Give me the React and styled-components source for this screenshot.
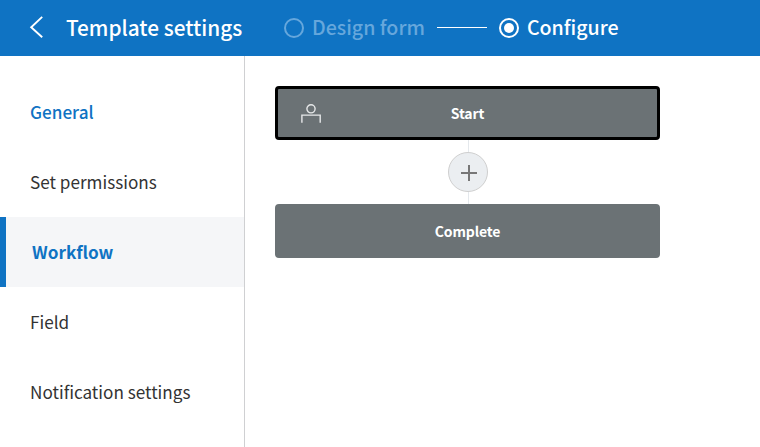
import React from "react";
import styled, { createGlobalStyle, css } from "styled-components";

const Global = createGlobalStyle`
  * { box-sizing: border-box; }
  body {
    margin: 0;
    background: #fff;
    font-family: "Noto Sans CJK KR", "Noto Sans", sans-serif;
    overflow: hidden;
  }
`;

const Page = styled.div`
  display: flex;
  flex-direction: column;
  width: 760px;
  height: 447px;
`;

const Header = styled.header`
  flex: none;
  display: flex;
  align-items: center;
  height: 56px;
  padding-left: 29px;
  background: #0f73c3;
  color: #fff;
`;

const BackIcon = styled.svg`
  width: 14px;
  height: 22px;
  margin-bottom: 2px;
`;

const Title = styled.h1`
  flex: none;
  width: 218px;
  margin: 0 0 0 23px;
  padding-bottom: 1px;
  font-size: 20.8px;
  font-weight: 500;
  line-height: 55px;
  white-space: nowrap;
`;

const Step = styled.div`
  display: flex;
  align-items: center;
  gap: 8px;
  height: 56px;
  color: ${(p) => (p.$active ? "#fff" : "#66a7dc")};
  font-size: 19.6px;
  font-weight: 500;
  white-space: nowrap;
`;

const StepLabel = styled.span`
  line-height: 54px;
  padding-bottom: 2px;
`;

const StepRing = styled.span`
  display: grid;
  place-items: center;
  width: 20px;
  height: 20px;
  border: 2px solid currentColor;
  border-radius: 50%;
`;

const StepDot = styled.span`
  width: 10px;
  height: 10px;
  border-radius: 50%;
  background: currentColor;
`;

const StepLine = styled.div`
  width: 50px;
  height: 1px;
  margin: 0 12px 2px;
  background: #fff;
`;

const Body = styled.div`
  display: flex;
  flex: 1;
`;

const Side = styled.nav`
  width: 245px;
  padding-top: 21px;
  border-right: 1px solid #cfd0d2;
`;

const Item = styled.div`
  height: 70px;
  padding-left: 30px;
  color: #333;
  font-size: 17.15px;
  line-height: 69px;
  ${(p) => p.$highlight && css`
    color: #0f73c3;
    font-weight: 500;
  `}
  ${(p) => p.$selected && css`
    padding-left: 26px;
    border-left: 6px solid #0f73c3;
    background: #f5f6f8;
    color: #0f73c3;
    font-weight: 700;
  `}
`;

const Main = styled.main`
  padding: 30px;
`;

const Flow = styled.div`
  display: flex;
  flex-direction: column;
  align-items: center;
  width: 385px;
`;

const Node = styled.div`
  display: grid;
  grid-template-columns: 48px 1fr 48px;
  align-items: center;
  width: 385px;
  height: 54px;
  border: 3px solid ${(p) => (p.$selected ? "#000" : "#6b7275")};
  border-radius: 4px;
  background: #6b7275;
`;

const NodeLabel = styled.span`
  grid-column: 2;
  grid-row: 1;
  color: #fff;
  font-size: 14px;
  font-weight: 700;
  letter-spacing: -0.12px;
  line-height: 20px;
  text-align: center;
`;

const PersonIcon = styled.svg`
  grid-column: 1;
  grid-row: 1;
  justify-self: end;
  width: 25px;
  height: 20px;
`;

const Connector = styled.div`
  width: 1px;
  height: 12px;
  margin-left: 1px;
  background: #e4e8ec;
`;

const AddButton = styled.button`
  display: grid;
  place-items: center;
  width: 40px;
  height: 40px;
  padding: 0;
  border: 1px solid #cfcfcf;
  border-radius: 50%;
  background: #ebeef1;
`;

const PlusIcon = styled.svg`
  width: 16px;
  height: 16px;
  margin: 2px 0 0 2px;
`;

const items = [
  { label: "General", highlight: true },
  { label: "Set permissions" },
  { label: "Workflow", selected: true },
  { label: "Field" },
  { label: "Notification settings" },
];

export default function App() {
  return (
    <Page>
      <Global />
      <Header>
        <BackIcon viewBox="0 0 14 22" fill="none" stroke="#fff" strokeWidth="1.9">
          <path d="M13.2 0.9L2.2 11.2L13.2 21.3" />
        </BackIcon>
        <Title>Template settings</Title>
        <Step>
          <StepRing />
          <StepLabel>Design form</StepLabel>
        </Step>
        <StepLine />
        <Step $active>
          <StepRing><StepDot /></StepRing>
          <StepLabel>Configure</StepLabel>
        </Step>
      </Header>
      <Body>
        <Side>
          {items.map((it) => (
            <Item key={it.label} $highlight={it.highlight} $selected={it.selected}>
              {it.label}
            </Item>
          ))}
        </Side>
        <Main>
          <Flow>
            <Node $selected>
              <PersonIcon viewBox="0 0 25 20" fill="none" stroke="#e6e8e9" strokeWidth="1.4">
                <circle cx="10" cy="5.8" r="4.1" />
                <path d="M0.9 19.8V12.1H19.2V19.8" />
              </PersonIcon>
              <NodeLabel>Start</NodeLabel>
            </Node>
            <Connector />
            <AddButton aria-label="Add step">
              <PlusIcon viewBox="0 0 16 16" stroke="#777" strokeWidth="2">
                <path d="M8 0V16M0 8H16" />
              </PlusIcon>
            </AddButton>
            <Connector />
            <Node>
              <NodeLabel>Complete</NodeLabel>
            </Node>
          </Flow>
        </Main>
      </Body>
    </Page>
  );
}
